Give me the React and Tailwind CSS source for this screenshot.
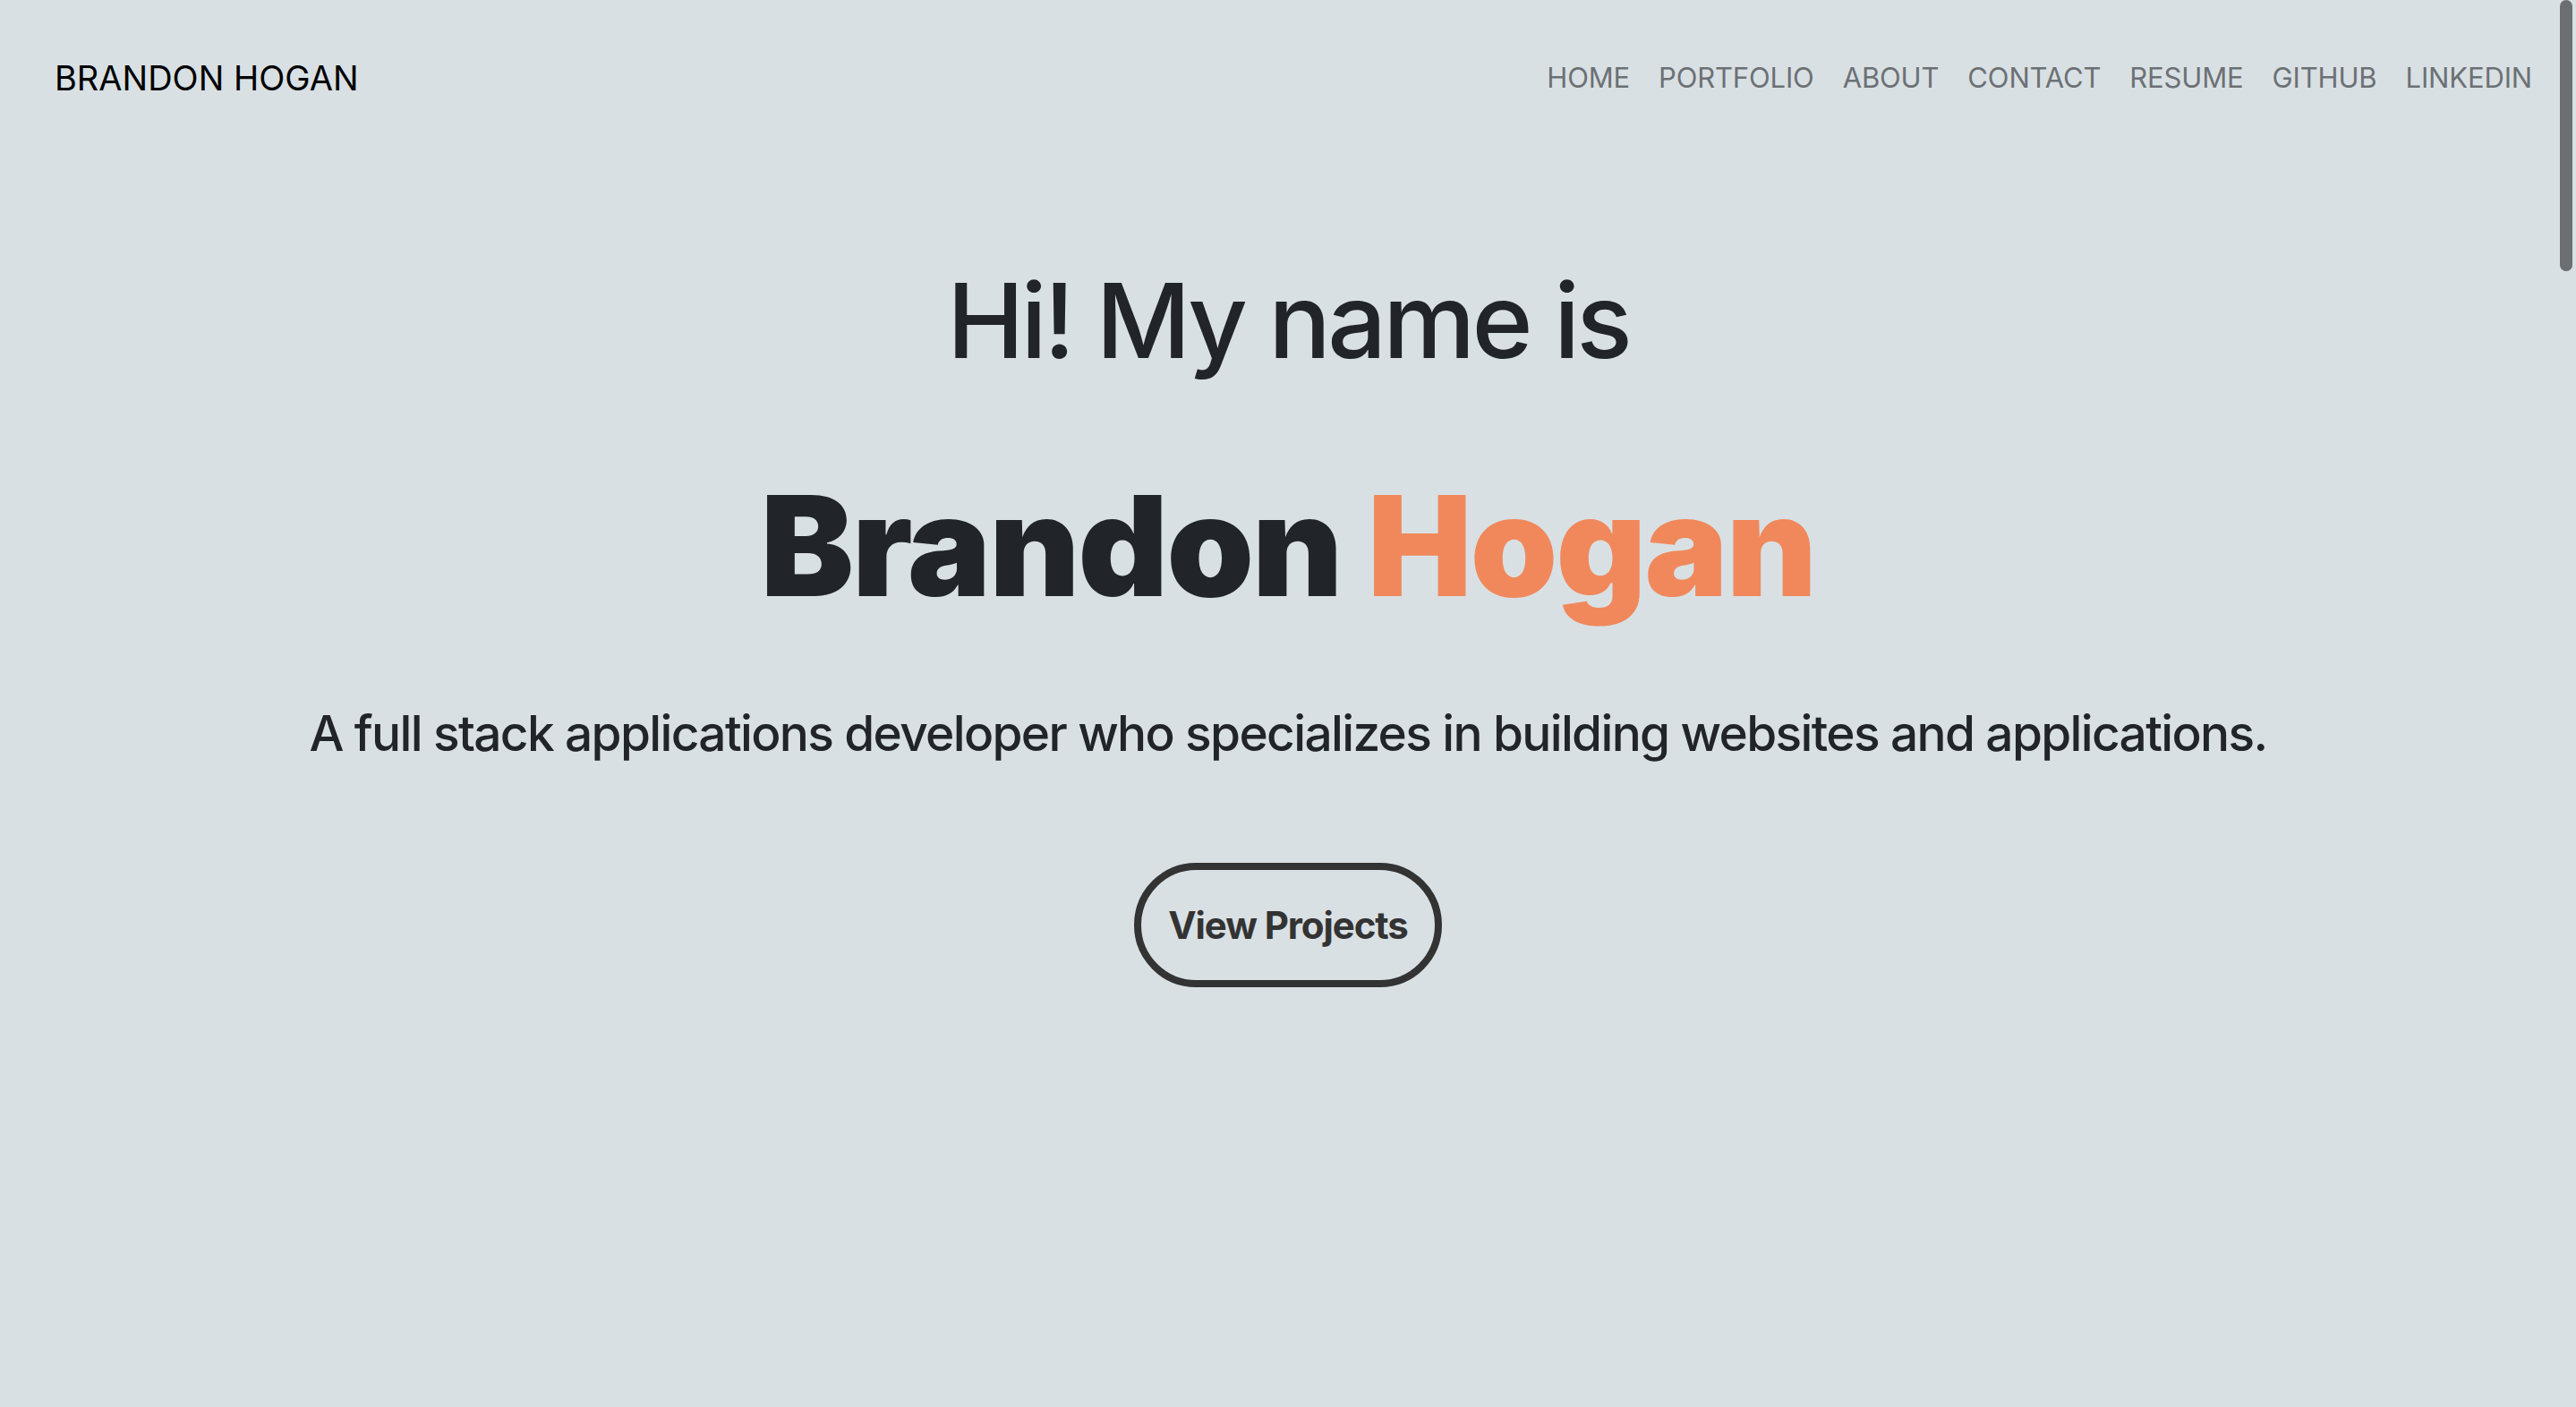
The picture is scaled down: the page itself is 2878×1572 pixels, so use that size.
import React from "react";

const links = ["HOME", "PORTFOLIO", "ABOUT", "CONTACT", "RESUME", "GITHUB", "LINKEDIN"];

export default function App() {
  return (
    <div className="relative min-h-[1572px] w-full overflow-hidden bg-[#d9e0e3] font-['Inter','Liberation_Sans',sans-serif] text-[#212529]">
      {/* header */}
      <nav className="flex h-[174px] items-center justify-between pl-[61px] pr-[49px]">
        <a href="#" className="text-[38px] leading-none text-black">
          BRANDON HOGAN
        </a>
        <ul className="flex items-center gap-[32px]">
          {links.map((l) => (
            <li key={l}>
              <a href="#" className="text-[31px] leading-none tracking-[-0.005em] text-[#6c7175]">
                {l}
              </a>
            </li>
          ))}
        </ul>
      </nav>

      {/* hero */}
      <main className="flex flex-col items-center pt-[126px] text-center">
        <h2 className="text-[116px] font-medium leading-none tracking-[-0.033em]">Hi! My name is</h2>
        <h1 className="mt-[116px] text-[156px] font-black leading-none tracking-[-0.012em]">
          Brandon <span className="text-[#f0885c]">Hogan</span>
        </h1>
        <p className="mt-[104px] text-[55px] font-medium leading-none tracking-[-0.03em]">
          A full stack applications developer who specializes in building websites and applications.
        </p>
        <button
          type="button"
          className="mt-[117px] flex h-[139px] items-center rounded-full border-[8px] border-[#333] px-[30px] text-[42px] font-bold tracking-[-0.026em] text-[#333]"
        >
          View Projects
        </button>
      </main>

      {/* overlay scrollbar thumb */}
      <div className="absolute right-[4px] top-0 h-[303px] w-[14px] rounded-full bg-[#6b6f72]" />
    </div>
  );
}
